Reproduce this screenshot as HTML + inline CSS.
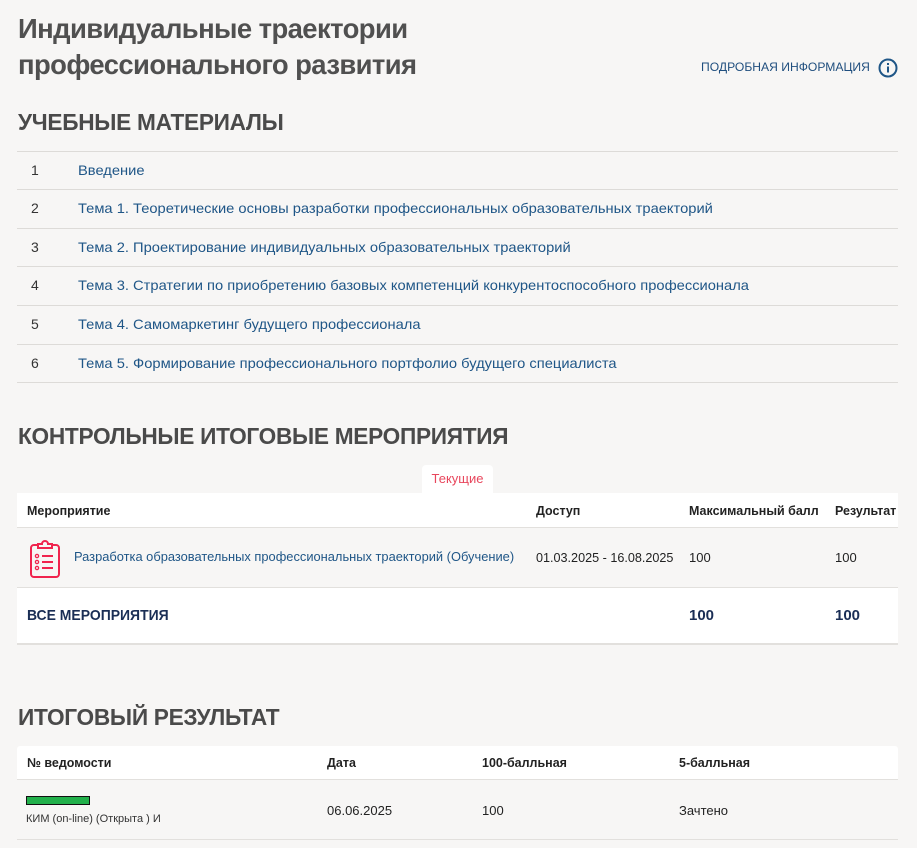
<!DOCTYPE html>
<html><head><meta charset="utf-8"><style>
*{margin:0;padding:0;box-sizing:border-box}
body{width:917px;height:848px;background:#f7f6f5;font-family:"Liberation Sans",sans-serif;color:#222;position:relative;overflow:hidden}
.a{position:absolute;white-space:nowrap}
h1{position:absolute;left:18px;top:11px;font-size:28px;line-height:36px;font-weight:600;color:#505050;letter-spacing:-0.6px;transform:scaleX(0.98);transform-origin:left}
.h2{position:absolute;left:18px;font-size:23px;font-weight:600;color:#4a4a4a;letter-spacing:-0.3px;transform:scaleX(0.985);transform-origin:left}
.row{position:absolute;left:17px;width:881px;border-top:1px solid #dddbd8;height:39px;font-size:14px}
.row .n{position:absolute;left:14px;top:10px;color:#333}
.row .t{position:absolute;left:61px;top:10px;color:#1f5687;transform:scaleX(1.05);transform-origin:left}
.f{font-size:13px}
.b{font-weight:bold;color:#222;transform:scaleX(0.96);transform-origin:left}
</style></head><body>
<h1>Индивидуальные траектории<br>профессионального развития</h1>
<div class="a f" style="left:701px;top:60px;font-size:12px;color:#1f4e7e;transform:scaleX(1.01);transform-origin:left">ПОДРОБНАЯ ИНФОРМАЦИЯ</div>
<svg class="a" style="left:878px;top:58px" width="20" height="20" viewBox="0 0 20 20"><circle cx="10" cy="10" r="8.5" fill="none" stroke="#1f5687" stroke-width="2"/><rect x="9" y="8.5" width="2" height="6" fill="#1f5687"/><rect x="9" y="5" width="2" height="2" fill="#1f5687"/></svg>
<div class="h2" style="top:109px">УЧЕБНЫЕ МАТЕРИАЛЫ</div>
<div class="row" style="top:151px"><span class="n">1</span><span class="t">Введение</span></div>
<div class="row" style="top:189px"><span class="n">2</span><span class="t">Тема 1. Теоретические основы разработки профессиональных образовательных траекторий</span></div>
<div class="row" style="top:228px"><span class="n">3</span><span class="t">Тема 2. Проектирование индивидуальных образовательных траекторий</span></div>
<div class="row" style="top:266px"><span class="n">4</span><span class="t">Тема 3. Стратегии по приобретению базовых компетенций конкурентоспособного профессионала</span></div>
<div class="row" style="top:305px"><span class="n">5</span><span class="t">Тема 4. Самомаркетинг будущего профессионала</span></div>
<div class="row" style="top:344px;border-bottom:1px solid #dddbd8"><span class="n">6</span><span class="t">Тема 5. Формирование профессионального портфолио будущего специалиста</span></div>
<div class="h2" style="top:423px">КОНТРОЛЬНЫЕ ИТОГОВЫЕ МЕРОПРИЯТИЯ</div>
<div class="a f" style="left:422px;top:465px;width:71px;height:29px;background:#fff;border-radius:4px 4px 0 0;color:#e8475d;text-align:center;line-height:28px">Текущие</div>
<div class="a" style="left:17px;top:493px;width:881px;height:35px;background:#fff;border-bottom:1px solid #e2e0dd"></div>
<div class="a f b" style="left:27px;top:503px">Мероприятие</div>
<div class="a f b" style="left:536px;top:503px">Доступ</div>
<div class="a f b" style="left:689px;top:503px">Максимальный балл</div>
<div class="a f b" style="left:835px;top:503px">Результат</div>
<svg class="a" style="left:28px;top:539px" width="34" height="40" viewBox="0 0 34 40"><rect x="3" y="6" width="28" height="32" rx="3" fill="none" stroke="#f0244e" stroke-width="2"/><path d="M10 9V5h4a3 3 0 0 1 6 0h4v4z" fill="#f7f6f5" stroke="#f0244e" stroke-width="2"/><circle cx="9" cy="17" r="1.6" fill="none" stroke="#f0244e" stroke-width="1.3"/><circle cx="9" cy="23" r="1.6" fill="none" stroke="#f0244e" stroke-width="1.3"/><circle cx="9" cy="29" r="1.6" fill="none" stroke="#f0244e" stroke-width="1.3"/><path d="M14 17h11M14 23h11M14 29h11" stroke="#f0244e" stroke-width="2"/></svg>
<div class="a f" style="left:74px;top:549px;color:#1f5687;transform:scaleX(0.99);transform-origin:left">Разработка образовательных профессиональных траекторий (Обучение)</div>
<div class="a f" style="left:536px;top:550px;transform:scaleX(0.97);transform-origin:left">01.03.2025 - 16.08.2025</div>
<div class="a f" style="left:689px;top:550px">100</div>
<div class="a f" style="left:835px;top:550px">100</div>
<div class="a" style="left:17px;top:587px;width:881px;height:58px;background:#fff;border-top:1px solid #e2e0dd;border-bottom:2px solid #e2e0dd"></div>
<div class="a f" style="left:27px;top:607px;font-size:15px;font-weight:bold;color:#1a2e55;transform:scaleX(0.93);transform-origin:left">ВСЕ МЕРОПРИЯТИЯ</div>
<div class="a f" style="left:689px;top:607px;font-size:15px;font-weight:bold;color:#1a2e55">100</div>
<div class="a f" style="left:835px;top:607px;font-size:15px;font-weight:bold;color:#1a2e55">100</div>
<div class="h2" style="top:704px">ИТОГОВЫЙ РЕЗУЛЬТАТ</div>
<div class="a" style="left:17px;top:746px;width:881px;height:34px;background:#fff;border-radius:3px 3px 0 0;border-bottom:1px solid #e2e0dd"></div>
<div class="a f b" style="left:27px;top:755px">№ ведомости</div>
<div class="a f b" style="left:327px;top:755px">Дата</div>
<div class="a f b" style="left:482px;top:755px">100-балльная</div>
<div class="a f b" style="left:679px;top:755px">5-балльная</div>
<div class="a" style="left:26px;top:796px;width:64px;height:9px;background:#22b04b;border:1px solid #111"></div>
<div class="a f" style="left:26px;top:813px;font-size:11px;color:#333">КИМ (on-line) (Открыта ) И</div>
<div class="a f" style="left:327px;top:803px">06.06.2025</div>
<div class="a f" style="left:482px;top:803px">100</div>
<div class="a f" style="left:679px;top:803px">Зачтено</div>
<div class="a" style="left:17px;top:839px;width:881px;border-top:1px solid #e2e0dd"></div>
</body></html>
